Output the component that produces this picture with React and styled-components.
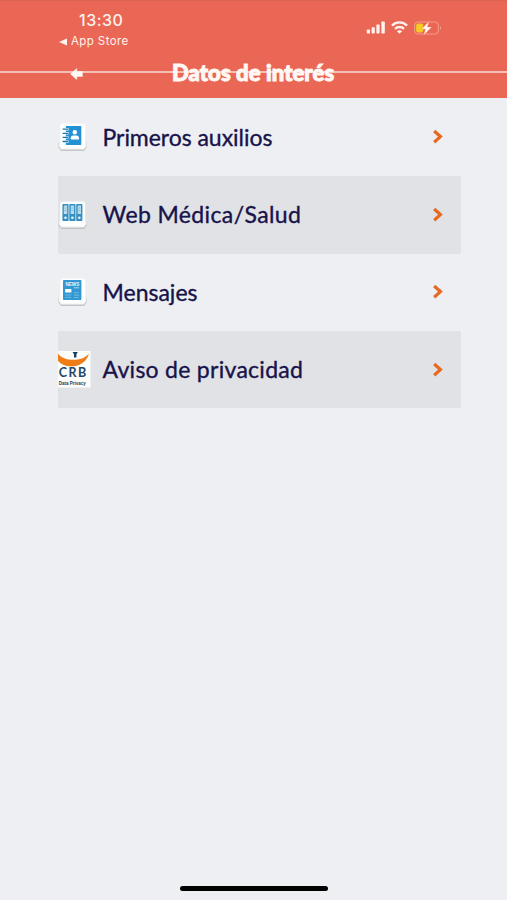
import React from 'react';
import styled, { createGlobalStyle } from 'styled-components';

const GlobalStyle = createGlobalStyle`
  * {
    box-sizing: border-box;
  }
  body {
    margin: 0;
    background-color: #eeeff3;
  }
`

const Screen = styled.div`
  display: flex;
  flex-direction: column;
  width: 507px;
  height: 900px;
  overflow: hidden;
  background-color: #eeeff3;
`

const Header = styled.header`
  position: relative;
  height: 98px;
  flex: none;
  background-color: #eb6755;
  border-top: 1px solid #dc6253;
  color: #fff3ee;
`

const HeaderLine = styled.div`
  position: absolute;
  left: 0;
  right: 0;
  top: 70px;
  height: 1.5px;
  background-color: #f5c0b5;
`

const StatusBar = styled.div`
  display: flex;
  justify-content: space-between;
  height: 50px;
  padding: 9px 65px 0 59px;
  font-family: Inter, sans-serif;
`

const Clock = styled.div`
  margin-left: 20px;
  font-size: 16px;
  line-height: 20px;
  font-weight: 500;
  letter-spacing: 0.5px;
`

const BackToApp = styled.div`
  display: flex;
  align-items: center;
  gap: 4px;
  margin-top: 4px;
  font-size: 11.5px;
  line-height: 15px;
  letter-spacing: 0.4px;
`

const StatusIcons = styled.div`
  display: flex;
  align-items: flex-start;
  gap: 6px;
  padding-top: 11px;
`

const TitleBar = styled.div`
  position: relative;
  display: flex;
  align-items: center;
  height: 46px;
  padding-left: 70px;
`

const Title = styled.h1`
  margin: -2px 0 0 89px;
  font-family: Lato, sans-serif;
  font-size: 22px;
  line-height: 26px;
  font-weight: 900;
  letter-spacing: 0.1px;
  white-space: nowrap;
  color: #fff8f4;
  -webkit-text-stroke: 1px #fff8f4;
`

const List = styled.ul`
  display: flex;
  flex-direction: column;
  list-style: none;
  margin: 0.8px 46px 0 57.5px;
  padding: 0;
  flex: 1;
`

const Row = styled.li`
  display: flex;
  align-items: center;
  height: 77.4px;
  padding-right: 17px;
  border-radius: 2px;
  background-color: ${props => props.$shaded ? '#e1e2e5' : 'transparent'};
`

const IconSlot = styled.div`
  display: flex;
  width: 45px;
  flex: none;
`

const Label = styled.span`
  flex: 1;
  margin-top: -1px;
  font-family: Lato, sans-serif;
  font-size: 23px;
  line-height: 30px;
  letter-spacing: ${props => props.$spacing}px;
  white-space: nowrap;
  color: #17134a;
  -webkit-text-stroke: 0.35px #17134a;
`

const HomeArea = styled.div`
  display: flex;
  justify-content: center;
  height: 14px;
  flex: none;
`

const HomeIndicator = styled.div`
  width: 148px;
  height: 5px;
  border-radius: 3px;
  background-color: #000;
`

const Signal = () => (
  <svg width="19" height="13" viewBox="0 0 19 13" fill="#fff3ee">
    <rect x="0.8" y="8.5" width="3.2" height="4" rx="0.8" />
    <rect x="5.6" y="6.3" width="3.2" height="6.2" rx="0.8" />
    <rect x="10.4" y="3.5" width="3.2" height="9" rx="0.8" />
    <rect x="15.4" y="0.5" width="3.4" height="12" rx="0.8" />
  </svg>
)

const Wifi = () => (
  <svg width="17" height="13" viewBox="0 0 17 13" fill="none" stroke="#fff3ee" strokeWidth="2.3">
    <path d="M1 4.6 C5.2 0.4 11.8 0.4 16 4.6" />
    <path d="M4 7.8 C6.5 5.4 10.5 5.4 13 7.8" />
    <path d="M8.5 12.7 L5.9 10.2 C7.4 8.9 9.6 8.9 11.1 10.2 Z" fill="#fff3ee" stroke="none" />
  </svg>
)

const Battery = () => (
  <svg width="28" height="15" viewBox="0 0 28 15">
    <rect x="0.6" y="1" width="23.8" height="12" rx="3.5" fill="none" stroke="#f29a85" strokeWidth="1.1" />
    <path d="M26 5 Q28 7 26 9 Z" fill="#f4a68f" />
    <rect x="2.2" y="2.6" width="7" height="8.8" rx="2" fill="#f8cb20" />
    <path d="M15.2 0.2 L7.4 8.2 H11.4 L9.4 14.4 L17.8 6 H13.4 Z" fill="#fff8ed" stroke="#ec6756" strokeWidth="0.3" />
  </svg>
)

const BackArrow = () => (
  <svg width="13" height="12" viewBox="0 0 13 12">
    <path d="M0.5 6 L6.8 0.5 V3.6 H12.4 V8.4 H6.8 V11.5 Z" fill="#fff8f4" stroke="#fff8f4" strokeWidth="0.5" strokeLinejoin="round" />
  </svg>
)

const Chevron = () => (
  <svg width="12" height="16" viewBox="0 0 12 16" fill="none" stroke="#e6691f" strokeWidth="3.2">
    <path d="M2.2 2 L8.4 7.6 L2.2 13.2" />
  </svg>
)

// White card with the folded edge that sits under the blue pictograms
const Card = ({ children }) => (
  <svg width="30" height="30" viewBox="0 0 30 30">
    <path d="M0.3 19 L3 27.2 H26.2 L28.7 19 V25 L26.2 28.8 H3 L0.3 25 Z" fill="#b8b8bc" />
    <path d="M0.5 18 L3 26.5 H26 L28.5 18 V24 L26 27.6 H3 L0.5 24 Z" fill="#f5f4f4" />
    <rect x="2.2" y="1.5" width="25" height="25" rx="3" fill="#fdfefe" />
    {children}
  </svg>
)

const Contacts = () => (
  <Card>
    <rect x="7.8" y="4" width="15.5" height="19" rx="0.8" fill="#2391d2" />
    <path d="M5 7.2 H10.5 M5 11.3 H10.5 M5 15.4 H10.5 M5 19.5 H10.5" stroke="#fff" strokeWidth="2.4" />
    <path d="M4.6 7.2 H10 M4.6 11.3 H10 M4.6 15.4 H10 M4.6 19.5 H10" stroke="#2176a5" strokeWidth="1.3" />
    <circle cx="16.8" cy="10.2" r="2.2" fill="#fff" />
    <path d="M12.7 17.4 V16.2 Q12.7 13.4 15.3 13.4 H18.3 Q21 13.4 21 16.2 V17.4 Z" fill="#fff" />
  </Card>
)

const Binders = () => (
  <Card>
    {[4.4, 11.3, 18.2].map(x => (
      <g key={x}>
        <rect x={x} y="4" width="6.2" height="17" rx="0.8" fill="#348fc2" />
        <rect x={x + 1.4} y="5.6" width="3.4" height="8.5" rx="0.5" fill="#b9ddec" />
        <path d={`M${x + 2} 8 H${x + 4.2} M${x + 2} 10.5 H${x + 4.2}`} stroke="#7eb4d0" strokeWidth="0.8" />
        <circle cx={x + 3.1} cy="17.7" r="1.3" fill="#e9f7fd" />
      </g>
    ))}
  </Card>
)

const News = () => (
  <Card>
    <rect x="5" y="3" width="18.4" height="20" rx="0.8" fill="#3397d3" />
    <text x="7.4" y="8.8" fill="#e5f5fc" fontFamily="Liberation Sans, sans-serif" fontSize="5" fontWeight="bold" textLength="14" lengthAdjust="spacingAndGlyphs">NEWS</text>
    <rect x="7.2" y="12" width="6.2" height="3.5" fill="#fff" />
    <path d="M7.2 18 H13.4 M7.2 20.4 H13.4 M15.8 15.8 H21 M15.8 18.2 H21 M15.8 20.5 H21" stroke="#75bde3" strokeWidth="0.9" />
    <path d="M15.8 10.8 H21" stroke="#a7d8ef" strokeWidth="1" />
  </Card>
)

const Privacy = () => (
  <svg width="33" height="37" viewBox="0 0 33 37">
    <rect x="0" y="0" width="32.5" height="36.5" fill="#fdfdfc" />
    <path d="M0 2.4 C5 10.5 24 11.5 31 2.4 C27.5 17.5 6 18.5 0 9.8 Z" fill="#ee7d16" />
    <path d="M14.6 1 H19.8 L18.4 3.2 V6.5 H16 V3.2 Z" fill="#183e59" />
    <text x="0.7" y="26.3" fill="#234866" fontFamily="Lato, sans-serif" fontSize="12.5" fontWeight="bold" textLength="27.5">CRB</text>
    <text x="0.8" y="33.8" fill="#263e56" fontFamily="Liberation Sans, sans-serif" fontSize="5.5" fontWeight="bold" textLength="27" lengthAdjust="spacingAndGlyphs">Data Privacy</text>
  </svg>
)

const items = [
  { label: 'Primeros auxilios', icon: Contacts, spacing: -0.04 },
  { label: 'Web Médica/Salud', icon: Binders, spacing: 0.38 },
  { label: 'Mensajes', icon: News, spacing: 0 },
  { label: 'Aviso de privacidad', icon: Privacy, spacing: 0.28 },
]

const App = () => {
  return (
    <>
      <GlobalStyle />
      <Screen>
        <Header>
          <HeaderLine />
          <StatusBar>
            <div>
              <Clock>13:30</Clock>
              <BackToApp>
                <svg width="8" height="8" viewBox="0 0 8 8"><path d="M0 4 L8 0.5 V7.5 Z" fill="#fff3ee" /></svg>
                App Store
              </BackToApp>
            </div>
            <StatusIcons>
              <Signal />
              <Wifi />
              <Battery />
            </StatusIcons>
          </StatusBar>
          <TitleBar>
            <BackArrow />
            <Title>Datos de interés</Title>
          </TitleBar>
        </Header>
        <List>
          {items.map((item, index) => {
            const Icon = item.icon
            return (
              <Row key={item.label} $shaded={index % 2 === 1}>
                <IconSlot><Icon /></IconSlot>
                <Label $spacing={item.spacing}>{item.label}</Label>
                <Chevron />
              </Row>
            )
          })}
        </List>
        <HomeArea>
          <HomeIndicator />
        </HomeArea>
      </Screen>
    </>
  )
}

export default App;
